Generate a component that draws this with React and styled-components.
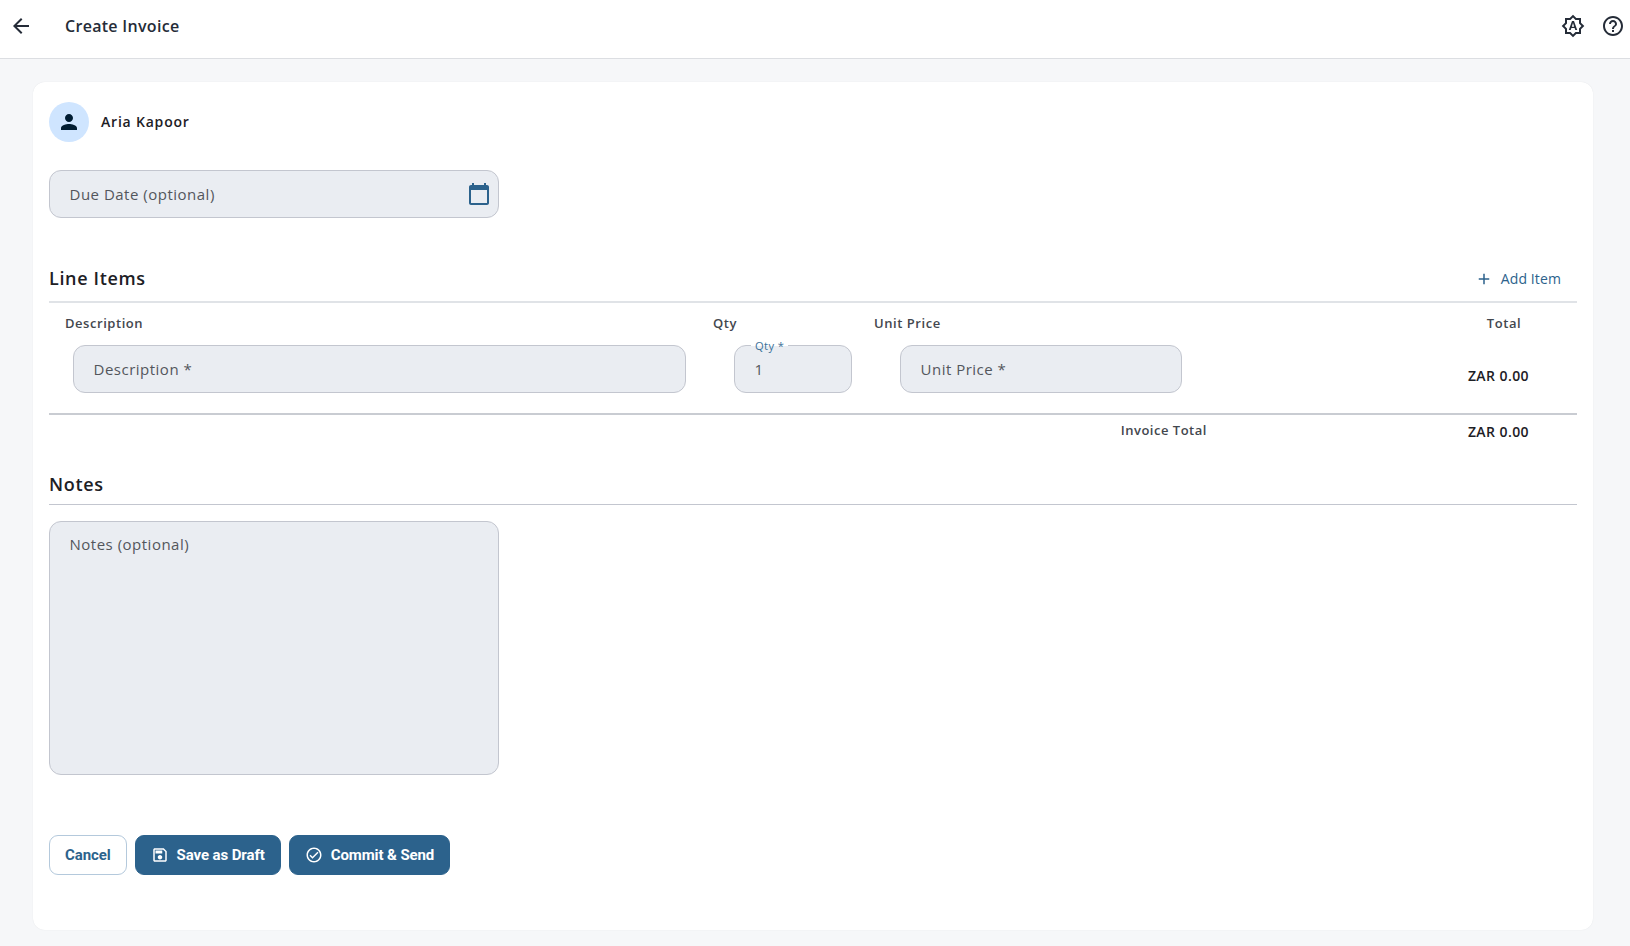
import React from 'react';
import styled, { createGlobalStyle } from 'styled-components';

const Global = createGlobalStyle`
  html, body { margin: 0; padding: 0; background: #f6f7f9; }
  body { font-family: "Open Sans", sans-serif; color: #1d2025; }
  * { box-sizing: border-box; }
`;

const Page = styled.div`
  width: 100%;
  height: 946px;
  display: flex;
  flex-direction: column;
  overflow: hidden;
  background: #f6f7f9;
`;

const TopBar = styled.header`
  height: 59px;
  flex: none;
  display: flex;
  align-items: center;
  background: #fff;
  border-bottom: 1px solid #dcdee2;
  padding: 0 5px 7px 9px;
`;

const TopTitle = styled.h1`
  margin: 0 0 0 32px;
  font-size: 16px;
  font-weight: 600;
  letter-spacing: 0.3px;
  color: #252c38;
  flex: 1;
`;

const TopIcons = styled.div`
  display: flex;
  gap: 16px;
`;

const Icon = styled.svg.attrs({ viewBox: '0 0 24 24' })`
  width: ${p => p.$size || 24}px;
  height: ${p => p.$size || 24}px;
  fill: currentColor;
  flex: none;
  display: block;
`;

const IconSlot = styled.span`
  color: #252c38;
  display: block;
`;

const Main = styled.main`
  flex: 1;
  padding: 23px 37px 16px 33px;
  display: flex;
`;

const Card = styled.section`
  flex: 1;
  background: #fff;
  border-radius: 12px;
  box-shadow: 0 0 1px rgba(30, 40, 60, 0.12);
  padding: 20px 16px 0;
  display: flex;
  flex-direction: column;
`;

const Person = styled.div`
  display: flex;
  align-items: center;
  gap: 12px;
  height: 40px;
`;

const Avatar = styled.div`
  width: 40px;
  height: 40px;
  border-radius: 50%;
  background: #cfe5ff;
  display: flex;
  align-items: center;
  justify-content: center;
  color: #001d33;
`;

const PersonName = styled.div`
  font-size: 14px;
  line-height: 20px;
  font-weight: 600;
  letter-spacing: 0.8px;
  color: #1d2025;
`;

const Field = styled.div`
  position: relative;
  width: ${p => p.$width}px;
  height: ${p => p.$height || 48}px;
  margin-left: ${p => p.$indent || 0}px;
  background: #eaedf2;
  border: 1px solid #c3c6cf;
  border-radius: 12px;
  padding: ${p => (p.$multiline ? '10px 19.5px' : '0 19.5px')};
  display: flex;
  align-items: ${p => (p.$multiline ? 'flex-start' : 'center')};
  justify-content: space-between;
  flex: none;
`;

const Placeholder = styled.span`
  font-size: 15px;
  line-height: 24px;
  letter-spacing: 0.5px;
  color: #53565c;
`;

const FloatLabel = styled.span`
  position: absolute;
  top: -7px;
  left: 16px;
  padding: 0 4px;
  font-size: 11.2px;
  line-height: 14px;
  letter-spacing: 0.4px;
  color: #3b7199;
  background: linear-gradient(to bottom, #fff 7px, #eaedf2 7px);
`;

const CalendarButton = styled.span`
  position: absolute;
  right: 7px;
  top: 11px;
  color: #2c628c;
`;

const DueField = styled.div`
  margin-top: 28px;
`;

const NotesField = styled.div`
  margin-top: 16px;
`;

const SectionHead = styled.div`
  display: flex;
  align-items: center;
  justify-content: space-between;
  border-bottom: ${p => (p.$thick ? '2px solid #e0e3e7' : '1px solid #c3c6cf')};
  margin-top: ${p => p.$top}px;
  height: ${p => p.$height}px;
  padding-top: ${p => p.$pad || 0}px;
`;

const SectionTitle = styled.h2`
  margin: 0;
  font-size: 18px;
  font-weight: 600;
  letter-spacing: 0.65px;
  color: #1d2025;
`;

const AddItem = styled.button`
  all: unset;
  display: flex;
  align-items: center;
  gap: 8px;
  padding-right: 16px;
  padding-top: 2px;
  font-size: 14px;
  letter-spacing: 0.1px;
  color: #2c628c;
`;

const LineGrid = styled.div`
  display: grid;
  grid-template-columns: 648px 161px 572px 1fr;
`;

const HeadCell = styled.div`
  height: 42px;
  padding-top: 10px;
  padding-left: ${p => (p.$center ? 1 : 16)}px;
  text-align: ${p => (p.$center ? 'center' : 'left')};
  font-size: 13px;
  line-height: 20px;
  font-weight: 600;
  letter-spacing: 0.55px;
  color: #43474e;
`;

const ItemCell = styled.div`
  height: 70px;
  border-bottom: 2px solid #c9ccd2;
`;

const AmountCell = styled(ItemCell)`
  padding-top: 21px;
  text-align: right;
  padding-right: 48px;
`;

const Amount = styled.div`
  font-size: 14px;
  line-height: 20px;
  font-weight: 600;
  letter-spacing: 0.42px;
  color: #1d2025;
  white-space: nowrap;
`;

const TotalRow = styled.div`
  display: flex;
  justify-content: flex-end;
  margin-top: 5px;
`;

const TotalLabel = styled.div`
  font-size: 13px;
  line-height: 20px;
  font-weight: 600;
  letter-spacing: 0.5px;
  color: #43474e;
  margin-right: 261px;
`;

const TotalValue = styled(Amount)`
  padding-right: 48px;
  padding-top: 2px;
`;

const Actions = styled.div`
  display: flex;
  gap: 8px;
  margin-top: 60px;
`;

const Button = styled.button`
  all: unset;
  height: 40px;
  border-radius: 9px;
  display: flex;
  align-items: center;
  gap: 8px;
  padding: 0 15px;
  font-family: Roboto, sans-serif;
  font-size: 15px;
  font-weight: 700;
  letter-spacing: -0.1px;
  background: ${p => (p.$primary ? '#2c628c' : '#fff')};
  color: ${p => (p.$primary ? '#fff' : '#2c628c')};
  border: 1px solid ${p => (p.$primary ? '#2c628c' : '#b4c9dc')};
  box-sizing: border-box;
`;

const paths = {
  back: 'M20 11H7.83l5.59-5.59L12 4l-8 8 8 8 1.41-1.41L7.83 13H20v-2z',
  auto: 'M20 8.69V4h-4.69L12 .69 8.69 4H4v4.69L.69 12 4 15.31V20h4.69L12 23.31 15.31 20H20v-4.69L23.31 12 20 8.69zm-2 5.79V18h-3.52L12 20.48 9.52 18H6v-3.52L3.52 12 6 9.52V6h3.52L12 3.52 14.48 6H18v3.52L20.48 12 18 14.48zM11 7l-3.2 9h1.9l.7-2h3.2l.7 2h1.9L13 7h-2zm-.15 5.65L12 9l1.15 3.65h-2.3z',
  help: 'M11 18h2v-2h-2v2zm1-16C6.48 2 2 6.48 2 12s4.48 10 10 10 10-4.48 10-10S17.52 2 12 2zm0 18c-4.41 0-8-3.59-8-8s3.59-8 8-8 8 3.59 8 8-3.59 8-8 8zm0-14c-2.21 0-4 1.79-4 4h2c0-1.1.9-2 2-2s2 .9 2 2c0 2-3 1.75-3 5h2c0-2.25 3-2.5 3-5 0-2.21-1.79-4-4-4z',
  person: 'M12 12c2.21 0 4-1.79 4-4s-1.79-4-4-4-4 1.79-4 4 1.79 4 4 4zm0 2c-2.67 0-8 1.34-8 4v2h16v-2c0-2.66-5.33-4-8-4z',
  calendar: 'M20 3h-1V1h-2v2H7V1H5v2H4c-1.1 0-2 .9-2 2v16c0 1.1.9 2 2 2h16c1.1 0 2-.9 2-2V5c0-1.1-.9-2-2-2zm0 18H4V8h16v13z',
  add: 'M19 13h-6v6h-2v-6H5v-2h6V5h2v6h6v2z',
  save: 'M17 3H5c-1.11 0-2 .9-2 2v14c0 1.1.89 2 2 2h14c1.1 0 2-.9 2-2V7l-4-4zm2 16H5V5h11.17L19 7.83V19zm-7-7c-1.66 0-3 1.34-3 3s1.34 3 3 3 3-1.34 3-3-1.34-3-3-3zM6 6h9v4H6z',
  check: 'M12 2C6.48 2 2 6.48 2 12s4.48 10 10 10 10-4.48 10-10S17.52 2 12 2zm0 18c-4.41 0-8-3.59-8-8s3.59-8 8-8 8 3.59 8 8-3.59 8-8 8zm4.59-12.42L10 14.17l-2.59-2.58L6 13l4 4 8-8z',
};

const Glyph = ({ name, size }) => (
  <Icon $size={size}><path d={paths[name]} /></Icon>
);

export default function App() {
  return (
    <Page>
      <Global />
      <TopBar>
        <IconSlot><Glyph name="back" /></IconSlot>
        <TopTitle>Create Invoice</TopTitle>
        <TopIcons>
          <IconSlot><Glyph name="auto" /></IconSlot>
          <IconSlot><Glyph name="help" /></IconSlot>
        </TopIcons>
      </TopBar>
      <Main>
        <Card>
          <Person>
            <Avatar><Glyph name="person" /></Avatar>
            <PersonName>Aria Kapoor</PersonName>
          </Person>

          <DueField>
            <Field $width={450}>
              <Placeholder>Due Date (optional)</Placeholder>
              <CalendarButton><Glyph name="calendar" /></CalendarButton>
            </Field>
          </DueField>

          <SectionHead $thick $top={36} $height={49}>
            <SectionTitle>Line Items</SectionTitle>
            <AddItem><Glyph name="add" size={18} />Add Item</AddItem>
          </SectionHead>

          <LineGrid>
            <HeadCell>Description</HeadCell>
            <HeadCell>Qty</HeadCell>
            <HeadCell>Unit Price</HeadCell>
            <HeadCell $center>Total</HeadCell>

            <ItemCell>
              <Field $width={613} $indent={24}><Placeholder>Description *</Placeholder></Field>
            </ItemCell>
            <ItemCell>
              <Field $width={118} $indent={37}>
                <FloatLabel>Qty *</FloatLabel>
                <Placeholder>1</Placeholder>
              </Field>
            </ItemCell>
            <ItemCell>
              <Field $width={282} $indent={42}><Placeholder>Unit Price *</Placeholder></Field>
            </ItemCell>
            <AmountCell><Amount>ZAR 0.00</Amount></AmountCell>
          </LineGrid>

          <TotalRow>
            <TotalLabel>Invoice Total</TotalLabel>
            <TotalValue>ZAR 0.00</TotalValue>
          </TotalRow>

          <SectionHead $top={20} $height={43} $pad={2}>
            <SectionTitle>Notes</SectionTitle>
          </SectionHead>

          <NotesField>
            <Field $width={450} $height={254} $multiline><Placeholder>Notes (optional)</Placeholder></Field>
          </NotesField>

          <Actions>
            <Button>Cancel</Button>
            <Button $primary><Glyph name="save" size={18} />Save as Draft</Button>
            <Button $primary><Glyph name="check" size={18} />Commit &amp; Send</Button>
          </Actions>
        </Card>
      </Main>
    </Page>
  );
}
